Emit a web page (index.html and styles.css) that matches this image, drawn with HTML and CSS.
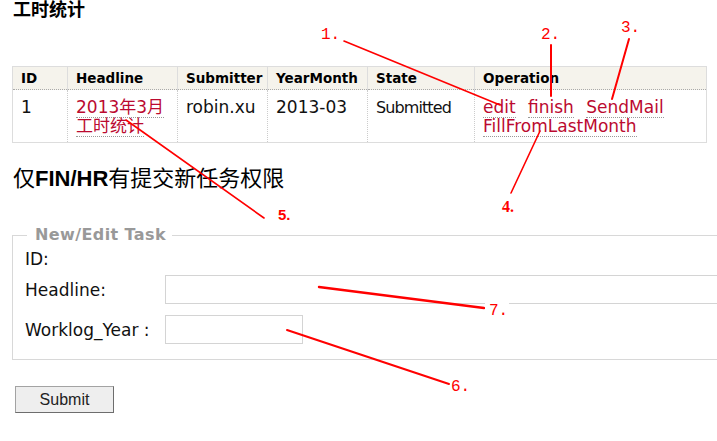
FILE: index.html
```html
<!DOCTYPE html>
<html>
<head>
<meta charset="utf-8">
<link rel="stylesheet" href="styles.css">
</head>
<body>
<div class="page">
  <h2 class="title">工时统计</h2>
  <table class="grid">
    <colgroup>
      <col class="c-id"><col class="c-head"><col class="c-sub"><col class="c-ym"><col class="c-state"><col class="c-op">
    </colgroup>
    <thead>
      <tr><th>ID</th><th>Headline</th><th>Submitter</th><th>YearMonth</th><th>State</th><th>Operation</th></tr>
    </thead>
    <tbody>
      <tr>
        <td>1</td>
        <td><a class="lnk" href="#">2013年3月工时统计</a></td>
        <td>robin.xu</td>
        <td>2013-03</td>
        <td class="state">Submitted</td>
        <td><a class="lnk op" href="#">edit</a> <a class="lnk op" href="#">finish</a> <a class="lnk op" href="#">SendMail</a> <a class="lnk op" href="#">FillFromLastMonth</a></td>
      </tr>
    </tbody>
  </table>
  <h3 class="notice">仅<strong>FIN/HR</strong>有提交新任务权限</h3>
  <fieldset class="task">
    <legend>New/Edit Task</legend>
    <div class="row row-id"><span class="lbl">ID:</span></div>
    <div class="row"><label class="lbl">Headline:</label><input class="inp inp-wide" type="text"></div>
    <div class="row"><label class="lbl">Worklog_Year :</label><input class="inp inp-short" type="text"></div>
  </fieldset>
  <button class="submit" type="button">Submit</button>
</div>
<svg class="notes" width="717" height="441" viewBox="0 0 717 441">
  <g stroke="#f00" fill="none" stroke-linecap="round">
    <line x1="344" y1="41" x2="500" y2="105" stroke-width="1.6"/>
    <line x1="551" y1="45" x2="551" y2="96" stroke-width="2"/>
    <line x1="629" y1="39" x2="612" y2="99" stroke-width="2"/>
    <line x1="540" y1="131" x2="511" y2="193" stroke-width="1.6"/>
    <line x1="126" y1="120" x2="264" y2="218" stroke-width="1.6"/>
    <line x1="287" y1="330" x2="449" y2="384" stroke-width="2"/>
    <line x1="319" y1="287" x2="484" y2="308" stroke-width="2.4"/>
  </g>
  <rect x="485" y="300" width="24" height="16" fill="#fff"/>
  <g fill="#f00">
    <text class="mono" x="321" y="39">1.</text>
    <text class="mono" x="541" y="39">2.</text>
    <text class="mono" x="621" y="32">3.</text>
    <text class="serifb" x="502" y="212">4.</text>
    <text class="sansb" x="278" y="220">5.</text>
    <text class="mono" x="451" y="391">6.</text>
    <text class="mono" x="489" y="315">7.</text>
  </g>
</svg>
</body>
</html>
```
FILE: styles.css
```css
html, body {
  margin: 0;
  padding: 0;
  overflow: hidden;
  background: #fff;
}
body {
  font-family: "DejaVu Sans", "Noto Sans CJK SC", sans-serif;
  color: #111;
  position: relative;
  width: 717px;
  height: 441px;
}
.page {
  padding: 0 0 0 12px;
}
.title {
  margin: 0 0 46px 1px;
  font-family: "Liberation Sans", "Noto Sans CJK SC", sans-serif;
  font-size: 18px;
  line-height: 20px;
  font-weight: bold;
  color: #000;
}
.grid {
  border-collapse: collapse;
  table-layout: fixed;
  width: 695px;
  border: 1px solid #ddd;
}
.c-id { width: 55px; }
.c-head { width: 110px; }
.c-sub { width: 90px; }
.c-ym { width: 100px; }
.c-state { width: 107px; }
.c-op { width: 232px; }
.grid th {
  background: #f5f3ec;
  border: 1px solid #ddd;
  border-bottom: 1px dotted #aaa;
  font-size: 13.5px;
  font-weight: bold;
  line-height: 22px;
  text-align: left;
  padding: 0 8px;
  color: #000;
  white-space: nowrap;
}
.grid td {
  border-left: 1px dotted #ccc;
  border-right: 1px dotted #ccc;
  border-bottom: 1px solid #ddd;
  font-size: 17px;
  line-height: 19px;
  vertical-align: top;
  padding: 8px 8px 6px;
}
.grid td.state {
  font-size: 16px;
  letter-spacing: -0.9px;
  white-space: nowrap;
}
.lnk {
  color: #bb0a30;
  text-decoration: none;
  border-bottom: 1px dotted #999;
}
.op {
  margin-right: 7px;
}
.notice {
  margin: 23px 0 0 1px;
  font-family: "Liberation Sans", "Noto Sans CJK SC", sans-serif;
  font-size: 22px;
  line-height: 26px;
  font-weight: normal;
  color: #000;
}
.notice strong {
  font-weight: bold;
}
.task {
  box-sizing: border-box;
  margin: 33px 0 0 0;
  width: 705px;
  min-width: 0;
  border: 1px solid #d8d8d8;
  border-right: none;
  padding: 4px 0 15px 12px;
}
.task legend {
  margin-left: 2px;
  padding: 0 6px 0 8px;
  font-size: 16px;
  line-height: 20px;
  letter-spacing: 0.4px;
  font-weight: bold;
  color: #999;
}
.row {
  display: flex;
  align-items: center;
  font-size: 17px;
  line-height: 20px;
  margin-top: 11px;
}
.row-id {
  margin-top: 0;
}
.row-id + .row {
  margin-top: 6px;
}
.lbl {
  width: 140px;
  flex: none;
  color: #111;
}
.inp {
  height: 29px;
  box-sizing: border-box;
  border: 1px solid #d4d4d4;
  margin: 0;
  padding: 2px 4px;
  font-size: 15px;
  background: #fff;
}
.inp-wide {
  width: 552px;
  border-right: none;
}
.inp-short { width: 138px; }
.submit {
  display: block;
  margin: 26px 0 0 3px;
  width: 99px;
  height: 27px;
  background: #eee;
  border: 1px solid;
  border-color: #a3a3a3 #6d6d6d #6d6d6d #a3a3a3;
  font-family: "Liberation Sans", Arial, sans-serif;
  font-size: 16px;
  color: #222;
  padding: 0;
}
.notes {
  position: absolute;
  left: 0;
  top: 0;
  pointer-events: none;
}
.mono {
  font-family: "Liberation Mono", monospace;
  font-size: 16px;
}
.serifb {
  font-family: "Liberation Serif", serif;
  font-weight: bold;
  font-size: 16px;
}
.sansb {
  font-family: "Liberation Sans", sans-serif;
  font-weight: bold;
  font-size: 15px;
}
```
